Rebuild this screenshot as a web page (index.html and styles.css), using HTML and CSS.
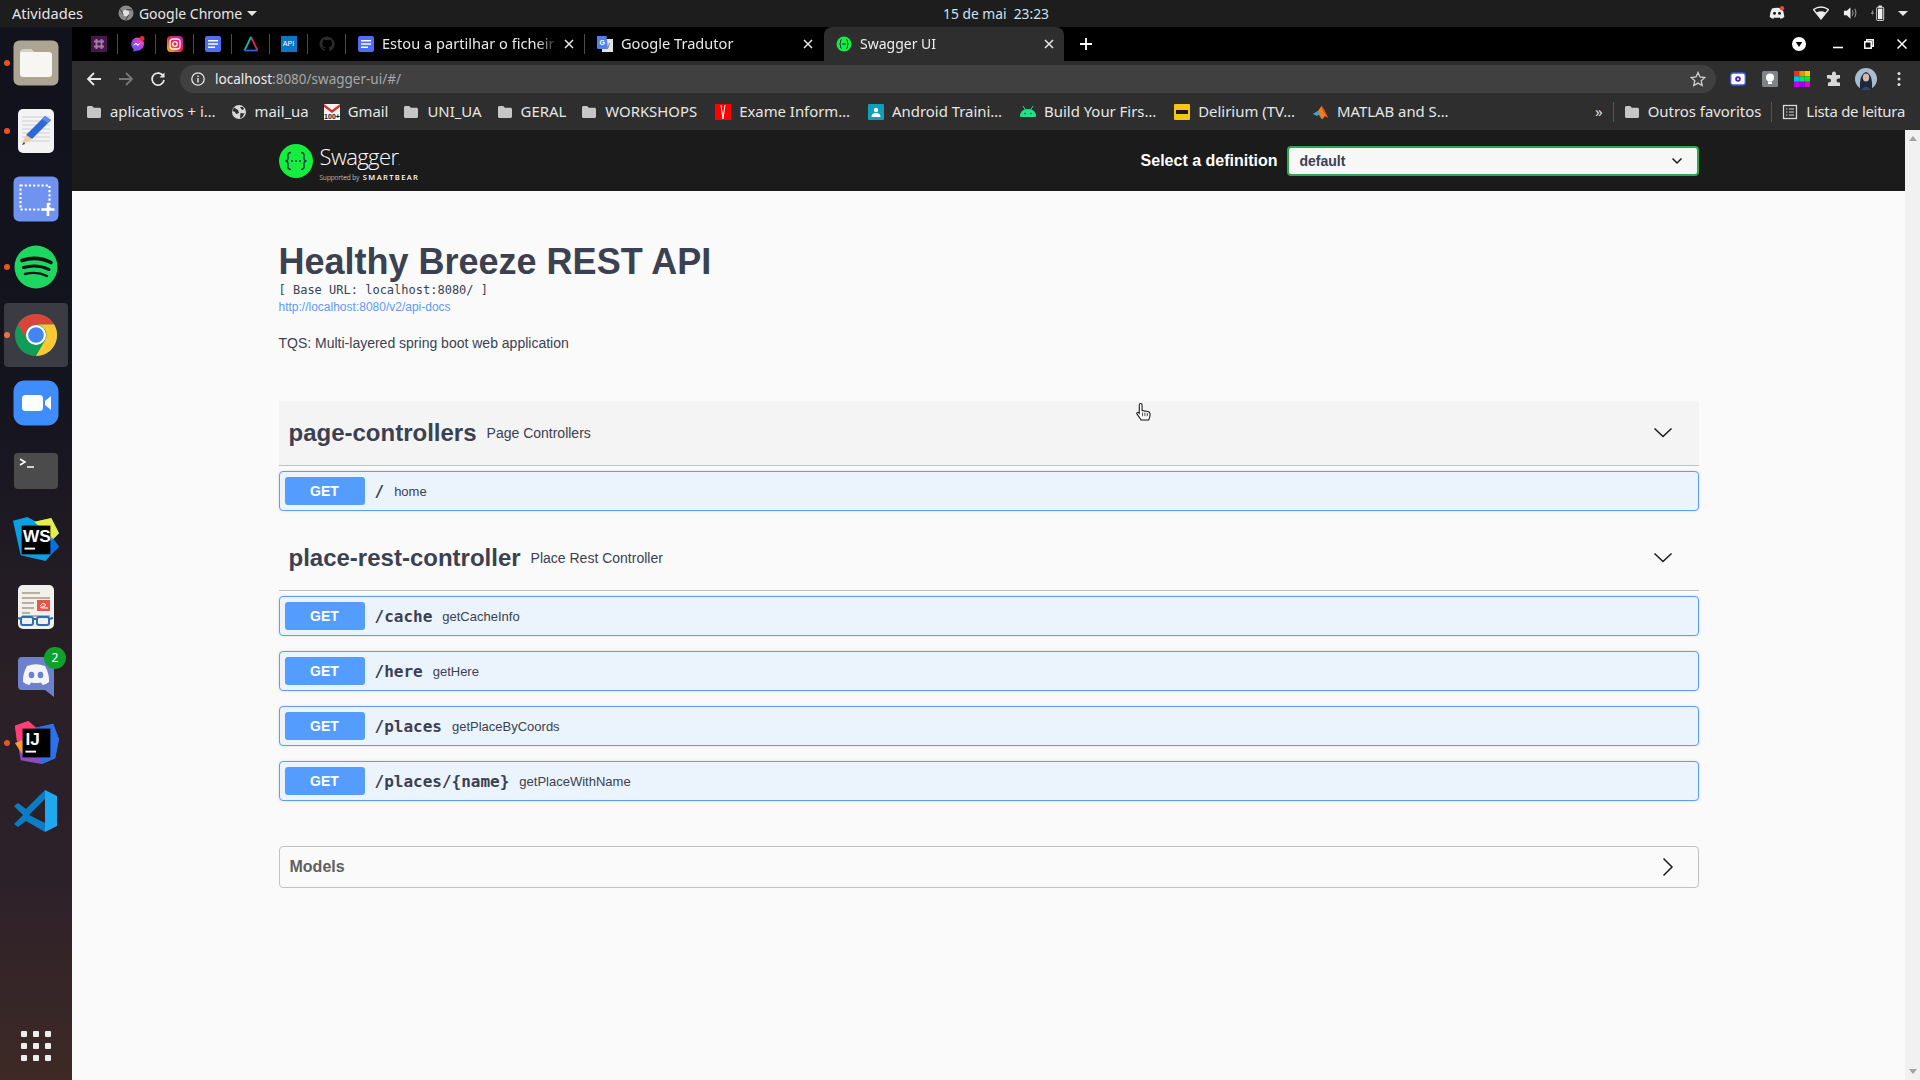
FILE: index.html
```html
<!DOCTYPE html>
<html lang="pt">
<head>
  <meta charset="UTF-8">
  <title>Swagger UI</title>
  <link rel="stylesheet" href="styles.css">
</head>
<body>
  <svg class="sprites" xmlns="http://www.w3.org/2000/svg">
    <symbol id="folder" viewBox="0 0 16 16"><path d="M1 3.5C1 2.7 1.7 2 2.5 2h3.7l1.6 1.7h5.7c.8 0 1.5.7 1.5 1.5v7.3c0 .8-.7 1.5-1.5 1.5h-11C1.7 14 1 13.3 1 12.5z" fill="#c6c6c6"/></symbol>
    <symbol id="docs" viewBox="0 0 16 16"><rect width="16" height="16" y="0" rx="2" fill="#4f6ef2"/><path d="M3 4h10v1.6H3zM3 7.2h10v1.6H3zM3 10.4h7V12H3z" fill="#fff"/></symbol>
    <symbol id="chev-down" viewBox="0 0 20 20"><path d="M1.5 5.5 10 13.5l8.5-8" fill="none" stroke="#1a1a1a" stroke-width="1.5"/></symbol>
  </svg>

  <div class="topbar">
    <div class="topbar-left">
      <span class="activities">Atividades</span>
      <span class="app-menu">
        <svg class="app-icon" viewBox="0 0 16 16"><circle cx="8" cy="8" r="7.5" fill="#8a8a8a"/><circle cx="8" cy="8" r="3.2" fill="#e0e0e0"/><path d="M8 4.8h6.6M5.2 9.6 2 3.8M10.8 9.6 7.6 15.4" stroke="#444" stroke-width="1"/></svg>
        Google Chrome
        <i class="caret"></i>
      </span>
    </div>
    <div class="clock">15 de mai&nbsp;&nbsp;23:23</div>
    <div class="tray">
      <svg class="tray-discord" viewBox="0 0 16 14"><path d="M3 2.5Q8 .8 13 2.5 15.5 7 15.2 11 13.5 12.6 11.5 12.8L10.6 11.4Q8 12 5.4 11.4L4.5 12.8Q2.5 12.6.8 11 .5 7 3 2.5z" fill="#eee"/><circle cx="5.5" cy="7.3" r="1.5" fill="#1d1d1d"/><circle cx="10.5" cy="7.3" r="1.5" fill="#1d1d1d"/><circle cx="13" cy="2.2" r="2.2" fill="#e8453c"/></svg>
      <svg class="tray-wifi" viewBox="0 0 16 14"><path d="M.5 3.5Q8-1.5 15.500 3.500L8 13z" fill="none" stroke="#eee" stroke-width="1.300"/><path d="M3.500 6.500Q8 4 12.500 6.500L8 13z" fill="#eee"/></svg>
      <svg class="tray-vol" viewBox="0 0 16 14"><path d="M1 4.500h3L8 1v12L4 9.500H1z" fill="#eee"/><path d="M10 4q1.500 3 0 6M12.500 2.500q2.500 4.500 0 9" fill="none" stroke="#999" stroke-width="1.100"/></svg>
      <svg class="tray-bat" viewBox="0 0 16 18"><path d="M1.500 6 0 10h2l-1 3 2.500-4.500h-2L3 6z" fill="#999"/><rect x="6.500" y="2.500" width="8" height="15" rx="1" fill="none" stroke="#eee" stroke-width="1"/><rect x="8.500" y="0.500" width="4" height="2" fill="#eee"/><rect x="8" y="4" width="5" height="12" fill="#eee"/></svg>
      <i class="caret"></i>
    </div>
  </div>

  <div class="desktop">
    <nav class="dock">
      <div class="dock-item has-dot">
        <svg viewBox="0 0 46 46"><rect x="0.500" y="0.500" width="45" height="45" rx="6" fill="#aca593"/><path d="M7 13c0-2 1.500-3.500 3.500-3.500h8L21 12h15c2 0 3 1 3 3v19c0 2-1 3-3 3H10c-2 0-3-1-3-3z" fill="#f7f6f3"/><path d="M7 13c0-2 1.500-3.500 3.500-3.500h8L21 12H8z" fill="#d6d2c8"/></svg>
      </div>
      <div class="dock-item has-dot">
        <svg viewBox="0 0 46 46"><rect x="5" y="1" width="36" height="44" rx="5" fill="#f3f3f3"/><path d="M9 9h28M9 13h28M9 17h28M9 21h28M9 25h28M9 29h28M9 33h28" stroke="#cfcfcf" stroke-width="1"/><path d="M38 12 19 31l-6-4 19-19z" fill="#2f66d8"/><path d="M32 8 38 12 35 15 29 11z" fill="#5c8df0"/><path d="M13 27l6 4-10 6z" fill="#f0c9a0"/><path d="M11 34l-2 3 3-1z" fill="#333"/></svg>
      </div>
      <div class="dock-item">
        <svg viewBox="0 0 46 46"><rect x="0.500" y="0.500" width="45" height="45" rx="6" fill="#6f93ee"/><rect x="7.500" y="9.500" width="29" height="24" fill="none" stroke="#fff" stroke-width="2.200" stroke-dasharray="2.200 2"/><path d="M35 27v13M28.500 33.500h13" stroke="#fff" stroke-width="2.600"/></svg>
      </div>
      <div class="dock-item has-dot">
        <svg viewBox="0 0 46 46"><circle cx="23" cy="23" r="21.500" fill="#1ed760"/><path d="M9 16.500Q24 11.500 38 18.500" fill="none" stroke="#141414" stroke-width="3.600" stroke-linecap="round"/><path d="M10.500 23.500Q24 19.500 36 25.500" fill="none" stroke="#141414" stroke-width="3" stroke-linecap="round"/><path d="M12 30Q24 27 34 32" fill="none" stroke="#141414" stroke-width="2.400" stroke-linecap="round"/></svg>
      </div>
      <div class="dock-item has-dot dock-active">
        <svg viewBox="0 0 48 48"><circle cx="24" cy="24" r="22" fill="#109d58"/><path d="M5 13A22 22 0 0 1 43 13H24a11 11 0 0 0-9.500 16.500z" fill="#db4437"/><path d="M43 13A22 22 0 0 1 24 46L33.500 29.500A11 11 0 0 0 24 13z" fill="#fcc934"/><circle cx="24" cy="24" r="10.500" fill="#fff"/><circle cx="24" cy="24" r="8.200" fill="#4285f4"/></svg>
      </div>
      <div class="dock-item">
        <svg viewBox="0 0 46 46"><rect x="0.500" y="0.500" width="45" height="45" rx="11" fill="#3f8dfd"/><rect x="9" y="15" width="21" height="16" rx="3.500" fill="#fff"/><path d="M32 21l6-5v14l-6-5z" fill="#fff"/></svg>
      </div>
      <div class="dock-item">
        <svg viewBox="0 0 46 46"><rect x="1" y="5" width="44" height="36" rx="4" fill="#4b4b4b"/><path d="M7 11l5 3-5 3" fill="none" stroke="#fff" stroke-width="1.500"/><path d="M14 19h7" stroke="#fff" stroke-width="1.500"/></svg>
      </div>
      <div class="dock-item">
        <svg viewBox="0 0 48 48"><path d="M0 5 15 1 24 6 40 2 48 18 42 24 48 32 40 40 34 47 8 41z" fill="#0a9fe0"/><path d="M22 6 40 2 48 18 42 24z" fill="#e8ec4a"/><path d="M40 40 48 32 42 24 34 30z" fill="#0a6fe0"/><rect x="9" y="10" width="30" height="30" fill="#000"/><text x="10.500" y="27" class="logo-text">WS</text><path d="M12 34h11" stroke="#fff" stroke-width="2"/></svg>
      </div>
      <div class="dock-item">
        <svg viewBox="0 0 46 46"><rect x="5" y="1" width="36" height="44" rx="5" fill="#f2f0ec"/><path d="M9 9h18M9 14h28M9 19h12M9 24h12M9 29h8M9 32h28" stroke="#b8b09e" stroke-width="2"/><rect x="24" y="16" width="13" height="11" fill="#e8544a"/><path d="M27 22q3-4 5-2t-3 3 6 1" fill="none" stroke="#fff" stroke-width="1"/><rect x="8" y="33" width="12" height="8" rx="2" fill="none" stroke="#2f6cb8" stroke-width="2"/><rect x="24" y="33" width="12" height="8" rx="2" fill="none" stroke="#2f6cb8" stroke-width="2"/><path d="M20 35h4M5 34l3 1M36 35l4-1" stroke="#2f6cb8" stroke-width="2"/></svg>
      </div>
      <div class="dock-item">
        <svg viewBox="0 0 46 46"><path d="M9 5h28a4 4 0 0 1 4 4v36L32 38H9a4 4 0 0 1-4-4V9a4 4 0 0 1 4-4z" fill="#6d80cc"/><path d="M14 14q9-3.500 18 0 4.500 8 4 16-3 2.600-6.500 3l-1.500-2.600q-5 1-10 0L16.500 33Q13 32.600 10 30q-.5-8 4-16z" fill="#f4f5fb"/><ellipse cx="18.500" cy="23" rx="2.800" ry="3.200" fill="#6d80cc"/><ellipse cx="27.500" cy="23" rx="2.800" ry="3.200" fill="#6d80cc"/></svg>
        <span class="dock-badge">2</span>
      </div>
      <div class="dock-item has-dot">
        <svg viewBox="0 0 48 48"><path d="M2 6 16 1 24 8 42 4 48 20 44 40 30 46 8 42z" fill="#8a4dbd"/><path d="M2 6 16 1 24 8 14 26 4 22z" fill="#fc3f74"/><path d="M2 24 12 20 10 36z" fill="#f79d35"/><path d="M24 8 42 4 48 20 44 40 30 46 24 30z" fill="#2a72e8"/><rect x="10" y="9" width="29" height="30" fill="#000"/><text x="13" y="26" class="logo-text">IJ</text><path d="M13 33h11" stroke="#fff" stroke-width="2"/></svg>
      </div>
      <div class="dock-item">
        <svg viewBox="0 0 46 46"><path d="M32 2 44 8v30l-12 6z" fill="#1fa8f0"/><path d="M32 2 13 21 5 15 1 18l9 9-9 9 4 3 8-6 19 11v-9L16 27 32 11z" fill="#0c7cc4"/></svg>
      </div>
      <div class="dock-apps">
        <i></i><i></i><i></i><i></i><i></i><i></i><i></i><i></i><i></i>
      </div>
    </nav>

    <div class="browser">
      <div class="tabstrip">
        <div class="pin"><svg viewBox="0 0 16 16"><rect width="16" height="16" fill="#4a154b"/><path d="M5.500 3v10M10.500 3v10M3 5.500h10M3 10.500h10" stroke="#a57ba8" stroke-width="1.800"/></svg></div>
        <i class="tab-sep"></i>
        <div class="pin"><svg viewBox="0 0 16 16"><defs><linearGradient id="msgr" x1="0" y1="1" x2="1" y2="0"><stop offset="0" stop-color="#2a7bff"/><stop offset=".5" stop-color="#b13cf0"/><stop offset="1" stop-color="#ff5c7a"/></linearGradient></defs><path d="M8 1.500a7 6.600 0 0 1 0 13.200l-2 .3-1.500 1V13A6.600 6.600 0 0 1 8 1.500z" fill="url(#msgr)"/><path d="M4 10l3-3.500 2 1.800 3-2-3 3.700-2-1.800z" fill="#fff"/><circle cx="13" cy="2.500" r="2.500" fill="#f0282d"/></svg></div>
        <i class="tab-sep"></i>
        <div class="pin"><svg viewBox="0 0 16 16"><defs><linearGradient id="insta" x1="0" y1="1" x2="1" y2="0"><stop offset="0" stop-color="#fdc30d"/><stop offset=".5" stop-color="#f0204e"/><stop offset="1" stop-color="#b320c8"/></linearGradient></defs><rect width="16" height="16" rx="4" fill="url(#insta)"/><rect x="3" y="3" width="10" height="10" rx="3" fill="none" stroke="#fff" stroke-width="1.300"/><circle cx="8" cy="8" r="2.300" fill="none" stroke="#fff" stroke-width="1.300"/></svg></div>
        <i class="tab-sep"></i>
        <div class="pin"><svg><use href="#docs"/></svg></div>
        <i class="tab-sep"></i>
        <div class="pin"><svg viewBox="0 0 16 16"><path d="M8 1 14.500 14.500" stroke="#e0245e" stroke-width="1.800"/><path d="M8 1 1.500 14.500" stroke="#14b8a6" stroke-width="1.800"/><path d="M1.500 14.500h13" stroke="#2563eb" stroke-width="1.800"/></svg></div>
        <i class="tab-sep"></i>
        <div class="pin"><span class="api-icon">API</span></div>
        <i class="tab-sep"></i>
        <div class="pin"><svg viewBox="0 0 16 16"><path d="M8 .5a7.500 7.500 0 0 0-2.400 14.600c.4.100.5-.2.500-.4v-1.400c-2.100.5-2.500-1-2.500-1-.3-.9-.8-1.100-.8-1.100-.7-.5.100-.5.100-.5.800.100 1.200.8 1.200.8.700 1.200 1.800.8 2.200.6.100-.5.300-.8.500-1-1.700-.2-3.400-.8-3.400-3.700 0-.8.300-1.500.8-2-.1-.2-.3-1 .1-2 0 0 .6-.2 2.100.8a7 7 0 0 1 3.800 0c1.400-1 2.100-.8 2.100-.8.400 1 .1 1.800.1 2 .5.500.8 1.200.8 2 0 2.900-1.800 3.500-3.400 3.700.3.200.5.700.5 1.400v2.100c0 .2.100.5.500.4A7.500 7.500 0 0 0 8 .5z" fill="#2c2c2c"/></svg></div>
        <i class="tab-sep"></i>
        <div class="tab">
          <svg class="tab-icon"><use href="#docs"/></svg>
          <span class="tab-title">Estou a partilhar o ficheir</span>
          <svg class="tab-close" viewBox="0 0 10 10"><path d="M1 1l8 8M9 1l-8 8" stroke="#e8e8e8" stroke-width="1.500"/></svg>
        </div>
        <i class="tab-sep"></i>
        <div class="tab">
          <svg class="tab-icon" viewBox="0 0 16 16"><rect x="5" y="3" width="11" height="13" fill="#e4e4e4"/><path d="M0 0h9.500L11 13H1.500A1.500 1.500 0 0 1 0 11.500z" fill="#4f81e8"/><text x="2.500" y="8.500" class="g-text">G</text><path d="M12.500 7l-1.500 5" stroke="#888" stroke-width="1"/></svg>
          <span class="tab-title">Google Tradutor</span>
          <svg class="tab-close" viewBox="0 0 10 10"><path d="M1 1l8 8M9 1l-8 8" stroke="#e8e8e8" stroke-width="1.500"/></svg>
        </div>
        <div class="tab tab-active">
          <svg class="tab-icon" viewBox="0 0 16 16"><circle cx="8" cy="8" r="7.500" fill="#14ee3c"/><path d="M6 3.500Q4 3.500 4.500 6 4.800 8 3.500 8 4.800 8 4.500 10 4 12.500 6 12.500M10 3.500Q12 3.500 11.500 6 11.200 8 12.500 8 11.200 8 11.500 10 12 12.500 10 12.500M6 8h4" fill="none" stroke="#173647" stroke-width="1"/></svg>
          <span class="tab-title">Swagger UI</span>
          <svg class="tab-close" viewBox="0 0 10 10"><path d="M1 1l8 8M9 1l-8 8" stroke="#e8e8e8" stroke-width="1.500"/></svg>
        </div>
        <svg class="new-tab" viewBox="0 0 12 12"><path d="M6 0v12M0 6h12" stroke="#fff" stroke-width="1.800"/></svg>
        <div class="window-btns">
          <svg class="media-btn" viewBox="0 0 14 14"><circle cx="7" cy="7" r="7" fill="#fff"/><path d="M3.800 5h6.400L7 10z" fill="#000"/></svg>
          <svg class="win-min" viewBox="0 0 10 10"><path d="M0 8.500h10" stroke="#fff" stroke-width="1.600"/></svg>
          <svg class="win-max" viewBox="0 0 10 10"><rect x="2.800" y=".8" width="6.400" height="6.400" fill="none" stroke="#fff" stroke-width="1.500"/><rect x=".8" y="2.800" width="6.400" height="6.400" fill="#000" stroke="#fff" stroke-width="1.500"/></svg>
          <svg class="win-close" viewBox="0 0 10 10"><path d="M.5.500l9 9M9.500.500l-9 9" stroke="#fff" stroke-width="1.500"/></svg>
        </div>
      </div>

      <div class="toolbar">
        <svg class="nav-btn" viewBox="0 0 16 16"><path d="M15 8H2M8 2 2 8l6 6" fill="none" stroke="#e8e8e8" stroke-width="1.800"/></svg>
        <svg class="nav-btn" viewBox="0 0 16 16"><path d="M1 8h13M8 2l6 6-6 6" fill="none" stroke="#777" stroke-width="1.800"/></svg>
        <svg class="nav-btn" viewBox="0 0 16 16"><path d="M13.500 5.500A6 6 0 1 0 14 9" fill="none" stroke="#e8e8e8" stroke-width="1.700"/><path d="M14.500 1.500v5h-5z" fill="#e8e8e8"/></svg>
        <div class="omnibox">
          <svg class="info-icon" viewBox="0 0 14 14"><circle cx="7" cy="7" r="6.200" fill="none" stroke="#e8e8e8" stroke-width="1.300"/><path d="M7 6v4.500M7 3.500v1.500" stroke="#e8e8e8" stroke-width="1.400"/></svg>
          <span class="url"><b>localhost</b>:8080/swagger-ui/#/</span>
          <svg class="star" viewBox="0 0 16 16"><path d="M8 1.500l2 4.500 4.800.5-3.600 3.200 1 4.800L8 12.100l-4.200 2.400 1-4.800L1.200 6.500 6 6z" fill="none" stroke="#cfcfcf" stroke-width="1.300"/></svg>
        </div>
        <div class="extensions">
          <svg viewBox="0 0 16 16"><rect x=".7" y="2" width="14.600" height="12" rx="2.500" fill="#fff" stroke="#3f5ce0" stroke-width="1.300"/><circle cx="8" cy="8" r="2.800" fill="#5020c8"/><circle cx="8" cy="8" r="1" fill="#fff"/></svg>
          <svg viewBox="0 0 16 16"><rect width="16" height="16" rx="1.500" fill="#7f8489"/><circle cx="8" cy="6.500" r="4" fill="#fff"/><rect x="6" y="10.500" width="4" height="2.500" fill="#fff"/></svg>
          <svg viewBox="0 0 16 16"><path d="M0 0h5.300v5.300H0z" fill="#f03010"/><path d="M5.300 0h5.400v5.300H5.300z" fill="#ff8a00"/><path d="M10.700 0H16v5.300h-5.300z" fill="#ffc800"/><path d="M0 5.300h5.300v5.400H0z" fill="#00c8d8"/><path d="M5.300 5.300h5.400v5.400H5.300z" fill="#10e060"/><path d="M10.700 5.300H16v5.400h-5.300z" fill="#20e020"/><path d="M0 10.700h5.300V16H0z" fill="#c000f0"/><path d="M5.300 10.700h5.400V16H5.300z" fill="#a000f0"/><path d="M10.700 10.700H16V16h-5.300z" fill="#e000d0"/></svg>
          <svg viewBox="0 0 16 16"><path d="M6 2.500a2 2 0 0 1 4 0V4h4v3.500h-1.500a2 2 0 0 0 0 4H14V15H2v-3.500h1a2 2 0 0 0 0-4H1V4h5z" fill="#d8d8d8"/></svg>
          <svg class="avatar" viewBox="0 0 22 22"><circle cx="11" cy="11" r="11" fill="#a9bdd0"/><path d="M5 22q-1-16 6-18 7 2 6 18z" fill="#1d2838"/><ellipse cx="11" cy="9.500" rx="3.200" ry="4" fill="#d8b8a4"/><path d="M6 22q5-7 10 0z" fill="#31466b"/></svg>
          <svg class="menu-dots" viewBox="0 0 4 16"><circle cx="2" cy="2.500" r="1.500" fill="#e0e0e0"/><circle cx="2" cy="8" r="1.500" fill="#e0e0e0"/><circle cx="2" cy="13.500" r="1.500" fill="#e0e0e0"/></svg>
        </div>
      </div>

      <div class="bookmarks">
        <a class="bm"><svg><use href="#folder"/></svg>aplicativos + i…</a>
        <a class="bm"><svg viewBox="0 0 16 16"><circle cx="8" cy="8" r="7" fill="#d8d8d8"/><path d="M3 3.500 7 6l1 3-3 1-1-2-2.500-1zM9 3h3l1 2-2 1zM9.500 9l4 .5-2.500 4-2 .5z" fill="#2e2e2e"/></svg>mail_ua</a>
        <a class="bm"><svg viewBox="0 0 16 16"><rect width="16" height="16" fill="#f4f4f4"/><path d="M0 0l8 6 8-6v3L8 9 0 3z" fill="#d93025"/><text x="8" y="15" class="gmail-text">100+</text></svg>Gmail</a>
        <a class="bm"><svg><use href="#folder"/></svg>UNI_UA</a>
        <a class="bm"><svg><use href="#folder"/></svg>GERAL</a>
        <a class="bm"><svg><use href="#folder"/></svg>WORKSHOPS</a>
        <a class="bm bm-clip"><svg viewBox="0 0 16 16"><rect width="16" height="16" fill="#f00"/><path d="M6 1l2 14 2-14" fill="none" stroke="#fff" stroke-width="1"/></svg>Exame Inform…</a>
        <a class="bm bm-clip"><svg viewBox="0 0 16 16"><rect width="16" height="16" rx="1" fill="#0f9fb8"/><circle cx="8" cy="6" r="2.200" fill="#fff"/><path d="M3.500 13q0-4 4.500-4t4.500 4z" fill="#fff"/></svg>Android Traini…</a>
        <a class="bm bm-clip"><svg viewBox="0 0 16 16"><path d="M0 13q0-8 8-8t8 8z" fill="#1de28a"/><path d="M3 2l2.500 4M13 2l-2.500 4" stroke="#1de28a" stroke-width="1"/><circle cx="5" cy="9.500" r=".8" fill="#2e2e2e"/><circle cx="11" cy="9.500" r=".8" fill="#2e2e2e"/></svg>Build Your Firs…</a>
        <a class="bm bm-clip"><svg viewBox="0 0 16 16"><rect width="16" height="16" rx="1" fill="#f5c518"/><rect x="2" y="6" width="12" height="4" fill="#1a1a1a"/></svg>Delirium (TV…</a>
        <a class="bm bm-clip"><svg viewBox="0 0 16 16"><path d="M0 10 5 7 8.500 2l3 4 3.500 8-3-2-3 3.500L6 11z" fill="#f07d1c"/><path d="M0 10l5-3 2 3-3 2z" fill="#3aa3d8"/><path d="M8.500 2l3 4 3.500 8-5-7z" fill="#d9441e"/></svg>MATLAB and S…</a>
        <div class="bm-right">
          <span class="bm-more">»</span>
          <i class="bm-sep"></i>
          <a class="bm"><svg><use href="#folder"/></svg>Outros favoritos</a>
          <i class="bm-sep"></i>
          <a class="bm bm-reading"><svg viewBox="0 0 16 16"><rect x="1.500" y="1.500" width="13" height="13" fill="none" stroke="#d8d8d8" stroke-width="1.300"/><path d="M4 5h1.500M7 5h5M4 8h1.500M7 8h5M4 11h1.500M7 11h5" stroke="#d8d8d8" stroke-width="1.200"/></svg>Lista de leitura</a>
        </div>
      </div>

      <div class="viewport">
        <main class="page">
          <header class="swagger-bar">
            <div class="swagger-bar-inner">
              <div class="logo">
                <svg class="logo-mark" viewBox="0 0 34 34"><circle cx="17" cy="17" r="17" fill="#14ee3c"/><path d="M12 8.500Q8.500 8.500 9 12.500 9.500 17 6.500 17 9.500 17 9 21.500 8.500 25.500 12 25.500M22 8.500Q25.500 8.500 25 12.500 24.500 17 27.500 17 24.500 17 25 21.500 25.500 25.500 22 25.500" fill="none" stroke="#173647" stroke-width="1.400"/><circle cx="13" cy="17" r="1" fill="#173647"/><circle cx="17" cy="17" r="1" fill="#173647"/><circle cx="21" cy="17" r="1" fill="#173647"/></svg>
                <div class="logo-words">
                  <span class="logo-name">Swagger<small>.</small></span>
                  <span class="logo-sub">Supported by <b>SMARTBEAR</b></span>
                </div>
              </div>
              <form class="definition">
                <span class="definition-label">Select a definition</span>
                <div class="definition-select">default
                  <svg viewBox="0 0 12 12"><path d="M1.500 3.500 6 8l4.500-4.500" fill="none" stroke="#1a1a1a" stroke-width="1.500"/></svg>
                </div>
              </form>
            </div>
          </header>

          <div class="wrapper">
            <section class="info">
              <h2 class="title">Healthy Breeze REST API</h2>
              <pre class="base-url">[ Base URL: localhost:8080/ ]</pre>
              <a class="spec-link">http://localhost:8080/v2/api-docs</a>
              <p class="description">TQS: Multi-layered spring boot web application</p>
            </section>

            <section class="tag-group">
              <h3 class="tag tag-hover"><span class="tag-name">page-controllers</span><small>Page Controllers</small><svg class="tag-arrow"><use href="#chev-down"/></svg></h3>
              <div class="op"><span class="op-method">GET</span><span class="op-path">/</span><span class="op-summary">home</span></div>
            </section>

            <section class="tag-group">
              <h3 class="tag"><span class="tag-name">place-rest-controller</span><small>Place Rest Controller</small><svg class="tag-arrow"><use href="#chev-down"/></svg></h3>
              <div class="op"><span class="op-method">GET</span><span class="op-path">/cache</span><span class="op-summary">getCacheInfo</span></div>
              <div class="op"><span class="op-method">GET</span><span class="op-path">/here</span><span class="op-summary">getHere</span></div>
              <div class="op"><span class="op-method">GET</span><span class="op-path">/places</span><span class="op-summary">getPlaceByCoords</span></div>
              <div class="op"><span class="op-method">GET</span><span class="op-path">/places/{name}</span><span class="op-summary">getPlaceWithName</span></div>
            </section>

            <section class="models">
              <h4>Models</h4>
              <svg viewBox="0 0 20 20"><path d="M5.500 1.500 14 10l-8.500 8.500" fill="none" stroke="#1a1a1a" stroke-width="1.500"/></svg>
            </section>
          </div>
        </main>
        <div class="scrollbar"><i class="arrow-up"></i><i class="arrow-down"></i></div>
        <svg class="cursor" viewBox="0 0 18 22"><path d="M6 1.500c1 0 1.500.7 1.500 1.500v6l6 1c1.500.3 2.500 1 2.500 2.500 0 2-.5 4.500-1.500 6.500h-8L2 12.500c-.7-1 .7-2.300 1.800-1.300L4.500 12V3c0-.8.500-1.500 1.500-1.500z" fill="#fff" stroke="#111" stroke-width="1.100"/><path d="M8 11v4M10.500 11v4M13 11.500v3.500" stroke="#111" stroke-width=".8"/></svg>
      </div>
    </div>
  </div>
</body>
</html>
```

FILE: styles.css
```css
* {
  box-sizing: border-box;
}
html, body {
  height: 100%;
}
body {
  margin: 0;
  overflow: hidden;
  display: flex;
  flex-direction: column;
  font-family: "Liberation Sans", Arial, sans-serif;
  background-color: #000;
}
.sprites {
  display: none;
}

/* gnome top bar */
.topbar {
  height: 27px;
  flex: none;
  display: grid;
  grid-template-columns: 1fr auto 1fr;
  align-items: center;
  background-color: #1d1d1d;
  color: #e6e6e6;
  font-family: "Noto Sans", sans-serif;
  font-size: 14px;
  padding: 0 12px 1px;
}
.topbar-left {
  display: flex;
  align-items: center;
}
.activities {
  font-size: 14.6px;
}
.app-menu {
  display: flex;
  align-items: center;
  margin-left: 35px;
}
.app-icon {
  width: 16px;
  height: 16px;
  margin-right: 5px;
}
.caret {
  display: inline-block;
  width: 0;
  height: 0;
  border-left: 5px solid transparent;
  border-right: 5px solid transparent;
  border-top: 5px solid #e6e6e6;
  margin-left: 5px;
}
.clock {
  font-size: 13.8px;
  color: #cfe0f0;
  margin-left: 72px;
}
.tray {
  display: flex;
  align-items: center;
  justify-content: flex-end;
}
.tray-discord { width: 16px; height: 14px; margin-right: 28px; }
.tray-wifi { width: 16px; height: 14px; margin-right: 14px; }
.tray-vol { width: 15px; height: 14px; margin-right: 13px; }
.tray-bat { width: 14px; height: 18px; margin-right: 8px; }

.desktop {
  flex: 1;
  display: flex;
  min-height: 0;
}

/* dock */
.dock {
  width: 72px;
  flex: none;
  display: flex;
  flex-direction: column;
  padding-top: 2px;
  background: linear-gradient(180deg, #12121c 0%, #14141f 35%, #2a2026 62%, #2c2029 80%, #3d2a26 100%);
}
.dock-item {
  position: relative;
  height: 68px;
  flex: none;
  display: flex;
  align-items: center;
  justify-content: center;
}
.dock-item svg {
  width: 46px;
  height: 46px;
}
.has-dot::before {
  content: "";
  position: absolute;
  left: 4px;
  top: 31px;
  width: 6px;
  height: 6px;
  border-radius: 50%;
  background-color: #e95420;
}
.dock-active::after {
  content: "";
  position: absolute;
  left: 4px;
  right: 4px;
  top: 2px;
  bottom: 2px;
  border-radius: 4px;
  background-color: rgba(255, 255, 255, 0.17);
}
.dock-active svg {
  position: relative;
  z-index: 1;
}
.dock-badge {
  position: absolute;
  top: 6px;
  right: 6px;
  width: 22px;
  height: 22px;
  border-radius: 50%;
  background-color: #11a02c;
  color: #fff;
  font-family: "Noto Sans", sans-serif;
  font-size: 12px;
  line-height: 22px;
  text-align: center;
}
.logo-text {
  font-family: "Liberation Sans", sans-serif;
  font-size: 18px;
  font-weight: bold;
  fill: #fff;
}
.dock-apps {
  margin-top: auto;
  height: 68px;
  padding: 19px 21px;
  display: grid;
  grid-template-columns: repeat(3, 6px);
  grid-template-rows: repeat(3, 6px);
  gap: 6px;
}
.dock-apps i {
  background-color: #eee;
  border-radius: 1px;
}

.browser {
  flex: 1;
  min-width: 0;
  display: flex;
  flex-direction: column;
}

/* tabs */
.tabstrip {
  height: 34px;
  flex: none;
  display: flex;
  align-items: center;
  padding-left: 8px;
  background-color: #000;
  color: #e8e8e8;
  font-family: "Noto Sans", sans-serif;
  font-size: 14.6px;
}
.pin {
  width: 37px;
  display: flex;
  justify-content: center;
}
.pin svg {
  width: 16px;
  height: 16px;
}
.api-icon {
  width: 16px;
  height: 16px;
  background-color: #0a76c4;
  color: #fff;
  font-size: 7px;
  line-height: 16px;
  text-align: center;
  font-family: "Liberation Sans", sans-serif;
}
.tab-sep {
  width: 1px;
  height: 20px;
  background-color: #4a4a4a;
  flex: none;
}
.tab {
  width: 238px;
  height: 34px;
  flex: none;
  display: flex;
  align-items: center;
  padding: 0 10px 0 12px;
}
.tab-active {
  width: 240px;
  margin-left: 1px;
  background-color: #2e2e2e;
  border-radius: 8px 8px 0 0;
  color: #eee;
  font-size: 14px;
}
.tab-icon {
  width: 16px;
  height: 16px;
  flex: none;
  margin-right: 8px;
}
.tab-title {
  flex: 1;
  margin-bottom: 2px;
  white-space: nowrap;
  -webkit-mask-image: linear-gradient(90deg, #000 88%, transparent 100%);
  mask-image: linear-gradient(90deg, #000 88%, transparent 100%);
}
.tab-close {
  width: 10px;
  height: 10px;
  flex: none;
  margin-left: 6px;
}
.g-text {
  font-family: "Liberation Sans", sans-serif;
  font-size: 7px;
  font-weight: bold;
  fill: #fff;
}
.new-tab {
  width: 12px;
  height: 12px;
  margin-left: 16px;
}
.window-btns {
  margin-left: auto;
  display: flex;
  align-items: center;
  padding-right: 13px;
}
.media-btn { width: 14px; height: 14px; margin-right: 27px; }
.win-min { width: 10px; height: 10px; margin-right: 21px; }
.win-max { width: 10px; height: 10px; margin-right: 23px; }
.win-close { width: 10px; height: 10px; }

/* toolbar */
.toolbar {
  height: 36px;
  flex: none;
  display: flex;
  align-items: center;
  padding-left: 14px;
  background-color: #2e2e2e;
}
.nav-btn {
  width: 16px;
  height: 16px;
  margin-right: 16px;
}
.omnibox {
  width: 1536px;
  margin-left: -2px;
  height: 28px;
  display: flex;
  align-items: center;
  padding: 0 10px 0 11px;
  border-radius: 14px;
  background-color: #404040;
  color: #a8a8a8;
  font-family: "Noto Sans", sans-serif;
  font-size: 13.5px;
}
.info-icon {
  width: 14px;
  height: 14px;
  margin-right: 10px;
}
.url b {
  font-weight: normal;
  color: #eee;
}
.star {
  width: 16px;
  height: 16px;
  margin-left: auto;
}
.extensions {
  display: flex;
  align-items: center;
  margin-left: 14px;
}
.extensions svg {
  width: 16px;
  height: 16px;
  margin-right: 16px;
}
.extensions .avatar {
  width: 22px;
  height: 22px;
  margin-left: -3px;
  margin-right: 20px;
}
.extensions .menu-dots {
  width: 4px;
  margin-right: 0;
}

/* bookmarks */
.bookmarks {
  height: 33px;
  flex: none;
  display: flex;
  align-items: center;
  padding: 0 15px 5px 14px;
  gap: 15px;
  background-color: #2e2e2e;
  color: #e6e6e6;
  font-family: "Noto Sans", sans-serif;
  font-size: 14.9px;
  white-space: nowrap;
}
.bm {
  display: flex;
  align-items: center;
}
.bm svg {
  width: 16px;
  height: 16px;
  margin-top: 2px;
  margin-right: 8px;
  flex: none;
}
.bm-clip {
  margin-left: 3px;
}
.bm-reading {
  letter-spacing: -0.25px;
}
.gmail-text {
  font-family: "Liberation Sans", sans-serif;
  font-size: 7px;
  font-weight: bold;
  text-anchor: middle;
  fill: #111;
}
.bm-right {
  margin-left: auto;
  display: flex;
  align-items: center;
  gap: 10px;
}
.bm-more {
  color: #ddd;
  font-size: 15px;
}
.bm-sep {
  width: 1px;
  height: 20px;
  margin-top: 2px;
  background-color: #555;
}

/* page */
.viewport {
  flex: 1;
  min-height: 0;
  position: relative;
  display: flex;
}
.page {
  flex: 1;
  min-width: 0;
  background-color: #fafafa;
  color: #3b4151;
}
.scrollbar {
  width: 15px;
  flex: none;
  display: flex;
  flex-direction: column;
  justify-content: space-between;
  align-items: center;
  padding: 6px 0;
  background-color: #f1f1f1;
}
.arrow-up {
  border-left: 4px solid transparent;
  border-right: 4px solid transparent;
  border-bottom: 5px solid #a3a3a3;
}
.arrow-down {
  border-left: 4px solid transparent;
  border-right: 4px solid transparent;
  border-top: 5px solid #a3a3a3;
}
.cursor {
  position: absolute;
  left: 1063px;
  top: 272px;
  width: 17px;
  height: 21px;
}

.swagger-bar {
  height: 61px;
  background-color: #1b1b1b;
}
.swagger-bar-inner,
.wrapper {
  width: 1420px;
  margin: 0 auto;
}
.swagger-bar-inner {
  height: 100%;
  display: flex;
  align-items: center;
  justify-content: space-between;
}
.logo {
  display: flex;
  align-items: center;
  gap: 7px;
}
.logo-mark {
  width: 34px;
  height: 34px;
}
.logo-words {
  display: flex;
  flex-direction: column;
  color: #fff;
  font-family: "Open Sans", sans-serif;
  font-weight: 300;
}
.logo-name {
  font-size: 22px;
  line-height: 23px;
  letter-spacing: -0.6px;
  margin-top: 5px;
}
.logo-name small {
  font-size: 8px;
}
.logo-sub {
  font-size: 6.5px;
  line-height: 9px;
  white-space: nowrap;
}
.logo-sub b {
  font-size: 7.5px;
  font-weight: 600;
  letter-spacing: 1.4px;
  margin-left: 2px;
}
.definition {
  display: flex;
  align-items: center;
}
.definition-label {
  color: #fff;
  font-size: 16px;
  font-weight: bold;
  margin-right: 9px;
}
.definition-select {
  width: 412px;
  height: 30px;
  display: flex;
  align-items: center;
  justify-content: space-between;
  padding: 0 14px 0 11px;
  border: 2px solid #2ea84a;
  border-radius: 4px;
  background-color: #f7f7f7;
  color: #3b4151;
  font-size: 14px;
  font-weight: bold;
}
.definition-select svg {
  width: 12px;
  height: 12px;
}

.info {
  padding-top: 50px;
}
.title {
  margin: 0;
  font-size: 36px;
  line-height: 42px;
  color: #3b4151;
}
.base-url {
  margin: 0;
  font-family: "DejaVu Sans Mono", monospace;
  font-size: 12px;
  line-height: 15px;
}
.spec-link {
  display: block;
  margin-top: 2px;
  font-size: 12px;
  line-height: 15px;
  color: #5f9bf5;
}
.description {
  margin: 20px 0 0;
  font-size: 14px;
  line-height: 16px;
}

.tag-group {
  margin-bottom: 15px;
}
.info + .tag-group {
  margin-top: 50px;
}
.tag {
  height: 65px;
  margin: 0 0 5px;
  display: flex;
  align-items: center;
  padding: 0 26px 0 10px;
  border-bottom: 1px solid #c2c2c4;
  font-size: 24px;
  color: #3b4151;
}
.tag-hover {
  background-color: #f4f4f4;
}
.tag small {
  margin-left: 10px;
  font-size: 14px;
  font-weight: normal;
}
.tag-arrow {
  width: 20px;
  height: 20px;
  margin-left: auto;
}
.op {
  height: 40px;
  margin-bottom: 15px;
  display: flex;
  align-items: center;
  padding: 0 5px;
  border: 1px solid #5c9dfb;
  border-radius: 4px;
  background-color: #ebf3fd;
  box-shadow: 0 0 3px rgba(0, 0, 0, 0.12);
}
.op:last-child {
  margin-bottom: 0;
}
.op-method {
  width: 80px;
  height: 28px;
  border-radius: 3px;
  background-color: #559cff;
  color: #fff;
  font-size: 14px;
  font-weight: bold;
  line-height: 28px;
  text-align: center;
}
.op-path {
  padding: 0 10px;
  font-family: "DejaVu Sans Mono", monospace;
  font-size: 16px;
  font-weight: bold;
}
.op-summary {
  font-size: 13px;
}
.models {
  height: 42px;
  margin-top: 45px;
  display: flex;
  align-items: center;
  justify-content: space-between;
  padding: 0 20px 0 10px;
  border: 1px solid #c2c2c4;
  border-radius: 4px;
}
.models h4 {
  margin: 0;
  font-size: 16px;
  color: #606060;
}
.models svg {
  width: 20px;
  height: 20px;
}
```
